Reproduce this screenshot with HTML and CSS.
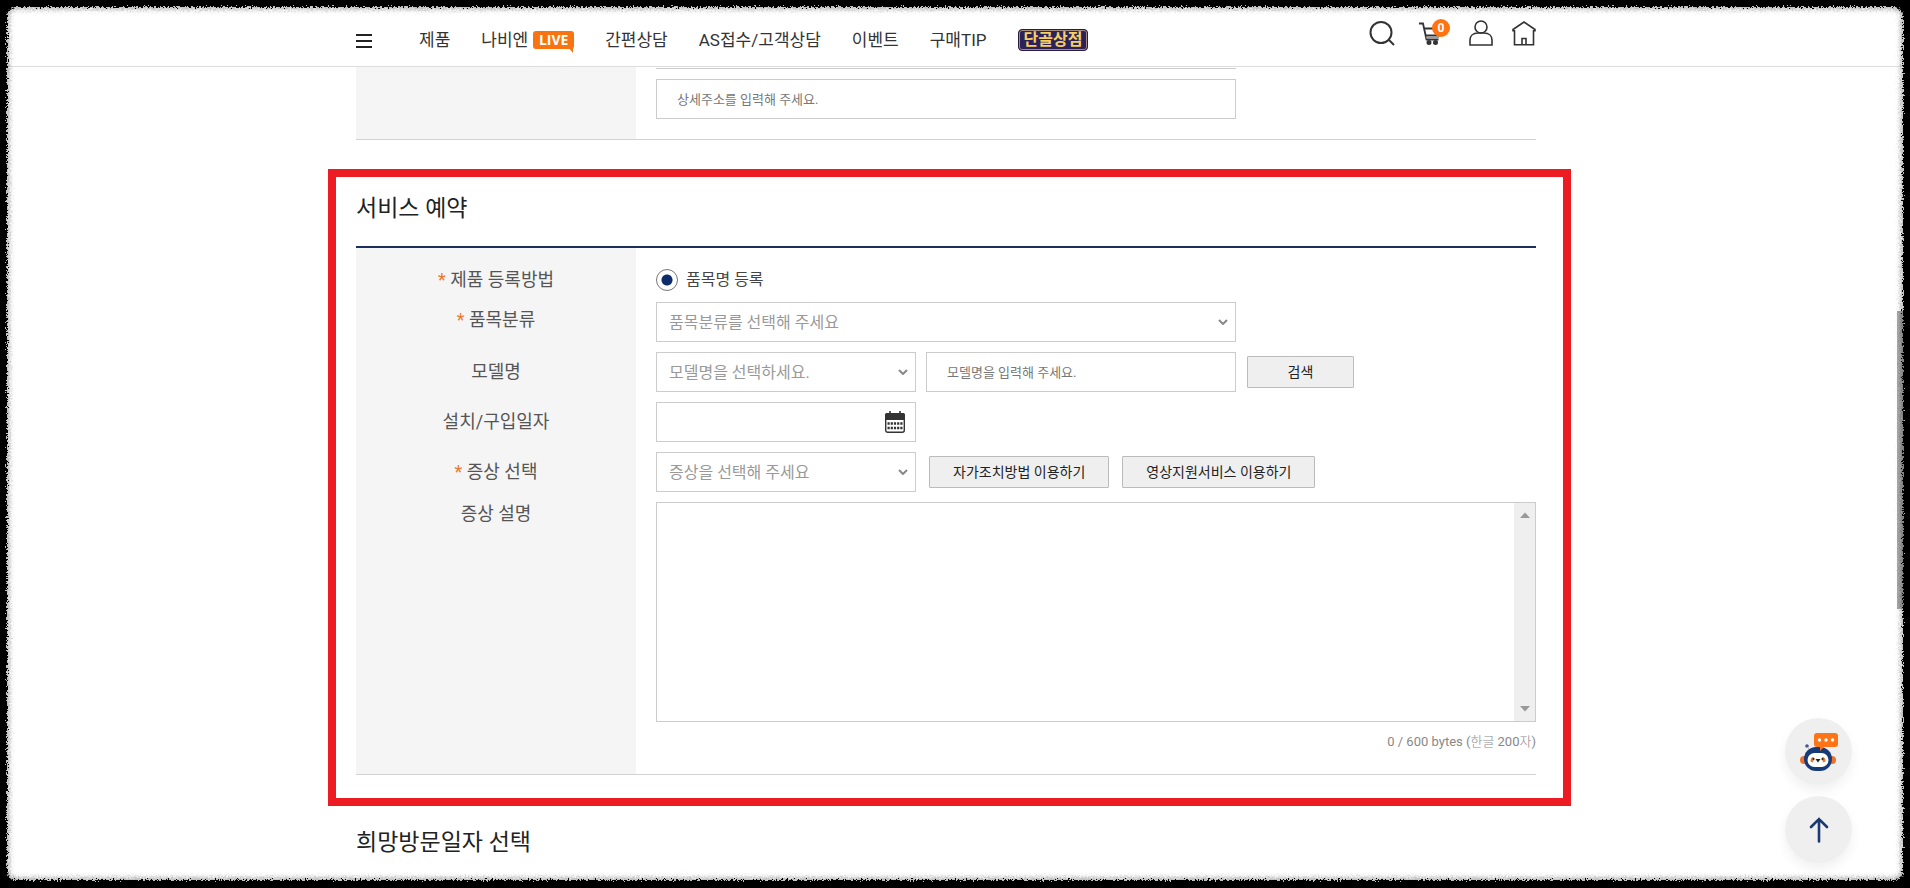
FILE: index.html
```
<!DOCTYPE html>
<html lang="ko">
<head>
<meta charset="utf-8">
<title>서비스 예약</title>
<link rel="stylesheet" href="styles.css">
</head>
<body>
<header class="header">
  <div class="wrap header-inner">
    <button class="icon-btn menu-btn" type="button" aria-label="전체 메뉴">
      <svg width="16" height="16" viewBox="0 0 16 16"><path d="M0 2h16M0 8h16M0 14h16" stroke="#222" stroke-width="2"/></svg>
    </button>
    <nav class="nav">
      <a href="#">제품</a>
      <a href="#" class="nav-live">나비엔 <span class="live">LIVE</span></a>
      <a href="#">간편상담</a>
      <a href="#">AS접수/고객상담</a>
      <a href="#">이벤트</a>
      <a href="#">구매TIP</a>
      <a href="#" class="shop">단골상점</a>
    </nav>
    <div class="tools">
      <button class="icon-btn" type="button" aria-label="검색">
        <svg width="26" height="26" viewBox="0 0 26 26" fill="none" stroke="#333" stroke-width="2"><circle cx="12" cy="12.500" r="10.500"/><path d="M19.500 19.500l5.500 5.500"/></svg>
      </button>
      <button class="icon-btn cart" type="button" aria-label="장바구니">
        <svg width="26" height="26" viewBox="0 0 26 26" fill="none" stroke="#333" stroke-width="1.800"><path d="M1 3.500h4l3.500 16h12M6 8.500h14M7 15.500h15" /><path d="M8 17.500h13" stroke="#999"/><circle cx="11" cy="22.500" r="1.600" fill="#333"/><circle cx="17.500" cy="22.500" r="1.600" fill="#333"/></svg>
        <span class="cart-count">0</span>
      </button>
      <button class="icon-btn" type="button" aria-label="마이페이지">
        <svg width="24" height="26" viewBox="0 0 24 26" fill="none" stroke="#333" stroke-width="1.600"><circle cx="12" cy="7" r="6"/><path d="M9 13h6c5 0 8 3 8 7v5H1v-5c0-4 3-7 8-7z"/></svg>
      </button>
      <button class="icon-btn" type="button" aria-label="홈">
        <svg width="24" height="26" viewBox="0 0 24 26" fill="none" stroke="#333" stroke-width="1.600"><path d="M1 11.500V9.500L12 2l11 7.500v2M2.500 10v14.800h19V10M10 24.500v-6h4v6"/></svg>
      </button>
    </div>
  </div>
</header>

<main class="wrap">
  <section class="form-grid address">
    <div></div>
    <div class="field-col">
      <div class="cut-line"></div>
      <input class="box wide" type="text" aria-label="상세주소" placeholder="상세주소를 입력해 주세요.">
    </div>
  </section>

  <section class="highlight">
    <h2 class="title">서비스 예약</h2>
    <form class="form-grid service">
      <div class="label method"><span class="req">*</span> 제품 등록방법</div>
      <div class="field">
        <label class="radio"><input type="radio" name="method" checked>품목명 등록</label>
      </div>

      <label class="label category" for="category"><span class="req">*</span> 품목분류</label>
      <div class="field">
        <select class="box wide" id="category"><option>품목분류를 선택해 주세요</option></select>
      </div>

      <label class="label" for="model">모델명</label>
      <div class="field">
        <select class="box short" id="model"><option>모델명을 선택하세요.</option></select>
        <input class="box medium" type="text" aria-label="모델명 입력" placeholder="모델명을 입력해 주세요.">
        <button class="btn search" type="button">검색</button>
      </div>

      <label class="label" for="date">설치/구입일자</label>
      <div class="field">
        <div class="box short date">
          <input type="text" id="date">
          <button class="icon-btn" type="button" aria-label="날짜 선택">
            <svg width="20" height="22" viewBox="0 0 20 22"><path d="M5 0v4M15 0v4" stroke="#333" stroke-width="1.600"/><rect x=".7" y="2.700" width="18.600" height="18.600" rx="2" fill="#fff" stroke="#333" stroke-width="1.400"/><path d="M0 9V4a2 2 0 0 1 2-2h16a2 2 0 0 1 2 2v5z" fill="#333"/><path d="M2.500 12.500h15M2.500 17h15" stroke="#333" stroke-width="2.500" stroke-dasharray="2.200 1"/></svg>
          </button>
        </div>
      </div>

      <label class="label" for="symptom"><span class="req">*</span> 증상 선택</label>
      <div class="field">
        <select class="box short" id="symptom"><option>증상을 선택해 주세요</option></select>
        <div class="actions">
          <button class="btn" type="button">자가조치방법 이용하기</button>
          <button class="btn" type="button">영상지원서비스 이용하기</button>
        </div>
      </div>

      <label class="label detail" for="detail">증상 설명</label>
      <div class="detail-field">
        <div class="area">
          <textarea id="detail"></textarea>
          <div class="area-scroll">
            <svg width="10" height="6" viewBox="0 0 10 6"><path d="M0 6l5-5.500L10 6z" fill="#999"/></svg>
            <svg width="10" height="6" viewBox="0 0 10 6"><path d="M0 0l5 5.500L10 0z" fill="#999"/></svg>
          </div>
        </div>
        <p class="count">0 / 600 bytes (<span>한글</span> 200<span>자</span>)</p>
      </div>
    </form>
  </section>

  <h2 class="title next">희망방문일자 선택</h2>
</main>

<aside class="floating">
  <button class="round" type="button" aria-label="챗봇 상담">
    <svg width="38" height="38" viewBox="0 0 38 38">
      <circle cx="4" cy="27" r="4" fill="#f0712a"/><circle cx="32" cy="27" r="4" fill="#f0712a"/>
      <circle cx="7" cy="13" r="1.800" fill="#4a5684"/><path d="M7.500 14l2 3" stroke="#bbb"/>
      <rect x="4" y="14" width="28" height="24" rx="12" fill="#173b78"/>
      <rect x="7.500" y="20" width="21" height="14" rx="7" fill="#fff"/>
      <path d="M10.500 28.500c0-3 1-4.500 3-4.500l1 2-2 3.500zM25.500 28.500c0-3-1-4.500-3-4.500l-1 2 2 3.500z" fill="#e97835"/>
      <circle cx="13.500" cy="26" r="1" fill="#222"/><circle cx="22.500" cy="26" r="1" fill="#222"/><path d="M15.500 26h5L18 29.500z" fill="#222"/>
      <path d="M17 0h18a3 3 0 0 1 3 3v8a3 3 0 0 1-3 3H24l-4 4v-4h-3a3 3 0 0 1-3-3V3a3 3 0 0 1 3-3z" fill="#ff7417"/>
      <circle cx="19.500" cy="7" r="1.700" fill="#fff"/><circle cx="26" cy="7" r="1.700" fill="#fff"/><circle cx="32.500" cy="7" r="1.700" fill="#fff"/>
    </svg>
  </button>
  <button class="round" type="button" aria-label="맨 위로">
    <svg width="20" height="26" viewBox="0 0 20 26" fill="none" stroke="#1c3a72" stroke-width="2.600" stroke-linecap="round"><path d="M10 24.500V2M2 10l8-8 8 8"/></svg>
  </button>
</aside>
<div class="page-thumb"></div>
<svg class="defs" width="0" height="0"><filter id="rough" x="0" y="0" width="100%" height="100%"><feTurbulence type="fractalNoise" baseFrequency="0.6" numOctaves="2" seed="4"/><feDisplacementMap in="SourceGraphic" scale="7" xChannelSelector="R" yChannelSelector="G"/></filter></svg>
<div class="frame"></div>
</body>
</html>
```

FILE: styles.css
```
* { box-sizing: border-box; }

body {
  margin: 0;
  padding-right: 18px;
  min-height: 100vh;
  overflow-x: hidden;
  background: #fff;
  color: #333;
  font-family: Roboto, "Noto Sans CJK KR", sans-serif;
  font-size: 16px;
}

button, input, select, textarea { font-family: inherit; color: inherit; }
a { color: inherit; text-decoration: none; }

.wrap { width: 1180px; max-width: 100%; margin: 0 auto; }

.header { margin-right: -18px; padding-right: 18px; border-bottom: 1px solid #ddd; background: #fff; }
.header-inner { display: flex; align-items: center; height: 66px; }
.icon-btn { display: flex; padding: 0; border: 0; background: none; cursor: pointer; }
.menu-btn { padding-top: 15px; }
.nav { display: flex; align-items: center; gap: 31px; flex: 1; padding: 14px 0 0 47px; font-size: 17px; line-height: 28px; white-space: nowrap; }
.nav-live { display: flex; align-items: center; gap: 5px; }
.live { position: relative; width: 41px; border-radius: 3px; background: #f97410; color: #fff; font: bold 14px/18px "Open Sans", sans-serif; text-align: center; }
.live::after { content: ""; position: absolute; right: 1px; top: 16px; border-style: solid; border-width: 0 5px 6px 4px; border-color: transparent #f97410 transparent transparent; }
.shop { height: 22px; padding: 0 5px; border: 1px solid #2b1c3c; border-radius: 4px; background: #2c2259; box-shadow: inset 0 0 0 1px #a58b86; color: #f5cf62; font-size: 16px; font-weight: bold; line-height: 19px; }
.tools { display: flex; gap: 19px; padding-bottom: 1px; }
.cart { position: relative; margin: 0 6px 0 4px; }
.cart-count { position: absolute; left: 14px; top: -1px; width: 18px; height: 18px; border-radius: 50%; background: #ff7310; color: #fff; font-size: 12px; font-weight: bold; line-height: 18px; text-align: center; }

.form-grid {
  display: grid;
  grid-template-columns: 280px 1fr;
  column-gap: 20px;
  border-bottom: 1px solid #d2d2d2;
  background: linear-gradient(#f5f5f5, #f5f5f5) no-repeat 0 0 / 280px 100%;
}
.address { padding-bottom: 20px; }
.cut-line { width: 580px; height: 2px; margin-bottom: 10px; border-bottom: 1px solid #ccc; }

.box { height: 40px; border: 1px solid #ccc; border-radius: 0; background: #fff; }
input.box { display: block; padding: 0 20px; font-size: 13px; }
input::placeholder { color: #777; opacity: 1; }
select.box {
  appearance: none;
  padding: 0 32px 0 12px;
  color: #999;
  font-size: 16px;
  background: #fff url("data:image/svg+xml,%3Csvg xmlns='http://www.w3.org/2000/svg' width='10' height='6'%3E%3Cpath d='M1 1l4 4 4-4' fill='none' stroke='%23888' stroke-width='2'/%3E%3C/svg%3E") no-repeat right 7px center;
}
.wide { width: 580px; }
.short { width: 260px; }
.medium { width: 310px; }

.highlight { margin: 29px -35px 0 -28px; padding: 14px 27px 23px 20px; border: 8px solid #ed1c24; }
.title { margin: 0; color: #222; font-size: 23px; font-weight: normal; line-height: 36px; }
.next { margin-top: 19px; }
.service { row-gap: 10px; margin-top: 19px; padding: 20px 0; border-top: 2px solid #1b2f5c; }
.label { color: #555; font-size: 18px; line-height: 24px; text-align: center; align-self: center; }
.label.category { align-self: start; line-height: 36px; }
.label.detail { align-self: start; }
.req { color: #ee7733; }
.field { display: flex; align-items: center; gap: 10px; }
.radio { display: flex; align-items: center; gap: 8px; height: 24px; color: #444; line-height: 24px; }
.radio input {
  appearance: none;
  width: 22px;
  height: 22px;
  margin: 0;
  border: 1px solid #777;
  border-radius: 50%;
  background: radial-gradient(circle, #0c2c6b 5px, #fff 6px);
}
.btn { height: 32px; padding: 0 23px 2px; border: 1px solid #bbb; border-radius: 1px; background: #efefef; color: #222; font-size: 14px; cursor: pointer; }
.search { width: 107px; margin-left: 1px; }
.actions { display: flex; gap: 13px; padding-left: 3px; }
.date { display: flex; align-items: center; padding-right: 10px; }
.date input { flex: 1; min-width: 0; height: 100%; border: 0; outline: 0; background: none; }

.area { display: flex; height: 220px; border: 1px solid #ccc; }
.area textarea { flex: 1; border: 0; resize: none; outline: 0; font-size: 16px; }
.area-scroll { display: flex; flex-direction: column; justify-content: space-between; align-items: center; width: 21px; padding: 9px 0; background: #efefef; }
.count { margin: 8px 0 0; color: #888; font-size: 13px; line-height: 24px; text-align: right; }
.count span { font-weight: 300; }

.floating { position: fixed; right: 58px; bottom: 25px; display: grid; gap: 11px; }
.round { display: grid; place-items: center; width: 67px; height: 67px; padding: 0; border: 0; border-radius: 50%; background: #efefef; box-shadow: 0 6px 12px rgba(0, 0, 0, 0.06); cursor: pointer; }

.page-thumb { position: fixed; right: 6px; top: 35%; width: 7px; height: 298px; background: #aaa; }
.defs { position: absolute; }
.frame {
  position: fixed;
  inset: -20px;
  border: 27px solid #000;
  border-bottom-width: 28px;
  border-radius: 36px;
  outline: 20px solid #000;
  box-shadow: inset 0 0 5px 2px rgba(0, 0, 0, 0.35);
  filter: url(#rough);
  pointer-events: none;
}
```
